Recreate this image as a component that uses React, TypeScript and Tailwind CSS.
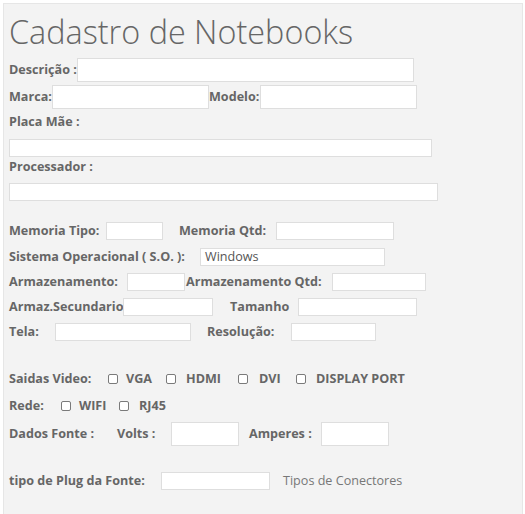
import React from "react";

const F = { fontFamily: '"Open Sans", "Liberation Sans", sans-serif' };

function Label({ w, children, className = "" }: { w: string; children: React.ReactNode; className?: string }) {
  return <span className={`shrink-0 whitespace-nowrap text-[12.6px] font-bold text-[#666] ${w} ${className}`}>{children}</span>;
}

function Input({ w, h = "h-[18px]" }: { w: string; h?: string }) {
  return <div className={`shrink-0 ${w} ${h} border border-[#dedede] bg-white`} />;
}

function Check({ className = "" }: { className?: string }) {
  return <span className={`shrink-0 w-[10px] h-[10px] rounded-[2px] border border-[#7a7a7a] bg-white ${className}`} />;
}

export default function App() {
  return (
    <div className="h-[514px] overflow-hidden bg-white pt-[3px] pl-[3px] pr-[2px]" style={F}>
      <div className="border border-[#e6e6e6] bg-[#f3f3f3] px-[5px] min-h-[560px]">
        <h1 className="mt-[11px] h-[32px] leading-[32px] text-[32.4px] font-light text-[#666] whitespace-nowrap">Cadastro de Notebooks</h1>

        <div className="mt-[11px] flex items-center h-[24px]">
          <Label w="w-[68px]">Descrição :</Label>
          <Input w="w-[337px]" h="h-[24px]" />
        </div>

        <div className="mt-[3px] flex items-center h-[24px]">
          <Label w="w-[43px]">Marca:</Label>
          <Input w="w-[157px]" h="h-[24px]" />
          <Label w="w-[51px]">Modelo:</Label>
          <Input w="w-[157px]" h="h-[24px]" />
        </div>

        <div className="mt-[3px] flex items-center h-[20px]">
          <Label w="w-auto">Placa Mãe :</Label>
        </div>
        <div className="mt-[7px] flex items-center h-[18px]">
          <Input w="w-[423px]" />
        </div>

        <div className="flex items-center h-[20px]">
          <Label w="w-auto">Processador :</Label>
        </div>
        <div className="mt-[6px] flex items-center h-[18px]">
          <Input w="w-[429px]" />
        </div>

        <div className="mt-[21px] flex items-center h-[18px]">
          <Label w="w-[97px]">Memoria Tipo:</Label>
          <Input w="w-[57px]" />
          <Label w="w-[97px]" className="ml-[16px]">Memoria Qtd:</Label>
          <Input w="w-[118px]" />
        </div>

        <div className="mt-[8px] flex items-center h-[18px]">
          <Label w="w-[191px]">Sistema Operacional ( S.O. ):</Label>
          <div className="shrink-0 w-[185px] h-[18px] border border-[#dedede] bg-white flex items-center pl-[4px] text-[12.6px] text-[#555]">Windows</div>
        </div>

        <div className="mt-[7px] flex items-center h-[18px]">
          <Label w="w-[118px]">Armazenamento:</Label>
          <Input w="w-[58px]" />
          <Label w="w-[146px]" className="ml-[1px]">Armazenamento Qtd:</Label>
          <Input w="w-[94px]" />
        </div>

        <div className="mt-[7px] flex items-center h-[18px]">
          <Label w="w-[114px]">Armaz.Secundario</Label>
          <Input w="w-[90px]" />
          <Label w="w-[68px]" className="ml-[17px]">Tamanho</Label>
          <Input w="w-[119px]" />
        </div>

        <div className="mt-[7px] flex items-center h-[18px]">
          <Label w="w-[46px]">Tela:</Label>
          <Input w="w-[136px]" />
          <Label w="w-[84px]" className="ml-[16px]">Resolução:</Label>
          <Input w="w-[85px]" />
        </div>

        <div className="mt-[29px] flex items-center h-[18px]">
          <Label w="w-[99px]">Saidas Video:</Label>
          <Check />
          <Label w="w-[40px]" className="ml-[8px]">VGA</Label>
          <Check />
          <Label w="w-[52px]" className="ml-[10px]">HDMI</Label>
          <Check />
          <Label w="w-[37px]" className="ml-[11px]">DVI</Label>
          <Check />
          <Label w="w-auto" className="ml-[10px]">DISPLAY PORT</Label>
        </div>

        <div className="mt-[9px] flex items-center h-[18px]">
          <Label w="w-[52px]">Rede:</Label>
          <Check />
          <Label w="w-[40px]" className="ml-[8px]">WIFI</Label>
          <Check />
          <Label w="w-auto" className="ml-[10px]">RJ45</Label>
        </div>

        <div className="mt-[7px] flex items-center h-[24px]">
          <Label w="w-[108px]">Dados Fonte :</Label>
          <Label w="w-[54px]">Volts :</Label>
          <Input w="w-[68px]" h="h-[24px]" />
          <Label w="w-[72px]" className="ml-[10px]">Amperes :</Label>
          <Input w="w-[68px]" h="h-[24px]" />
        </div>

        <div className="mt-[26px] flex items-center h-[18px]">
          <Label w="w-[152px]">tipo de Plug da Fonte:</Label>
          <Input w="w-[109px]" />
          <span className="ml-[13px] text-[12.6px] text-[#777] whitespace-nowrap">Tipos de Conectores</span>
        </div>
      </div>
    </div>
  );
}
